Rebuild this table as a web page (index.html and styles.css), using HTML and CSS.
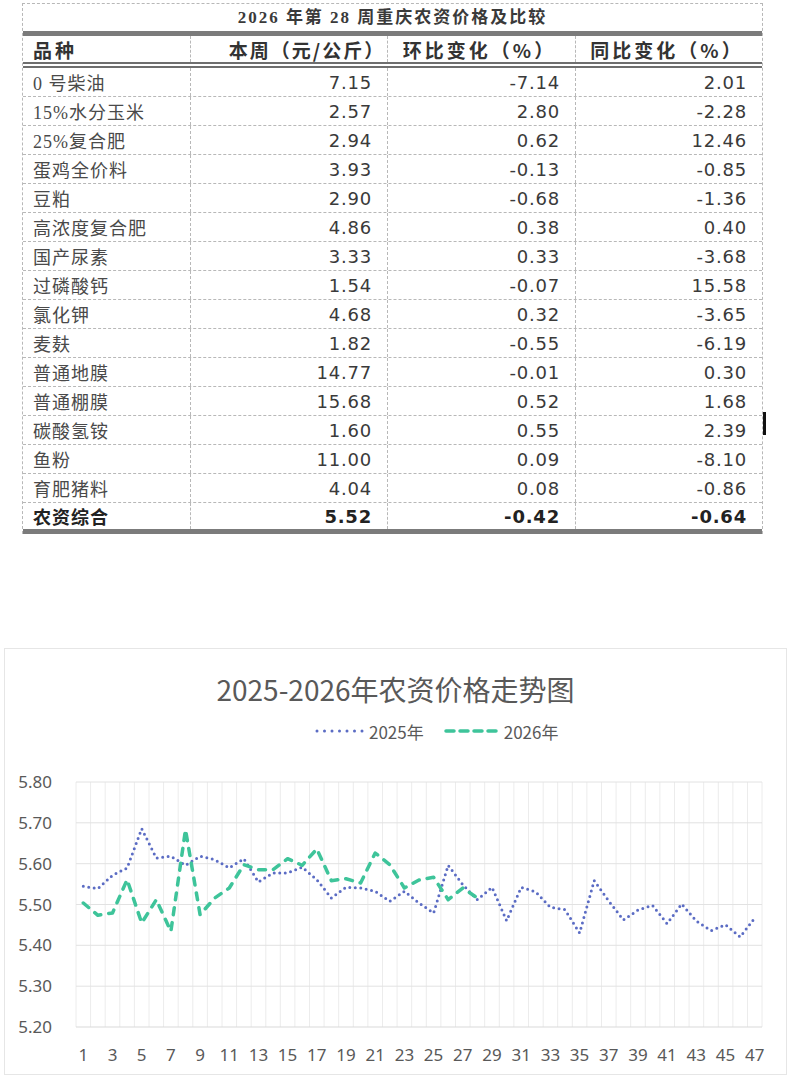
FILE: index.html
```html
<!DOCTYPE html>
<html lang="zh-CN">
<head>
<meta charset="utf-8">
<title>2026年第28周重庆农资价格及比较</title>
<link rel="stylesheet" href="styles.css">
</head>
<body>
<section class="sheet">
  <div class="sheet-title">2026 年第 28 周重庆农资价格及比较</div>
  <div class="row head">
    <div class="cell name">品种</div>
    <div class="cell h2">本周（元/公斤）</div>
    <div class="cell hc">环比变化（%）</div>
    <div class="cell hc">同比变化（%）</div>
  </div>
  <div class="row"><div class="cell name">0 号柴油</div><div class="cell num">7.15</div><div class="cell num">-7.14</div><div class="cell num">2.01</div></div>
  <div class="row"><div class="cell name">15%水分玉米</div><div class="cell num">2.57</div><div class="cell num">2.80</div><div class="cell num">-2.28</div></div>
  <div class="row"><div class="cell name">25%复合肥</div><div class="cell num">2.94</div><div class="cell num">0.62</div><div class="cell num">12.46</div></div>
  <div class="row"><div class="cell name">蛋鸡全价料</div><div class="cell num">3.93</div><div class="cell num">-0.13</div><div class="cell num">-0.85</div></div>
  <div class="row"><div class="cell name">豆粕</div><div class="cell num">2.90</div><div class="cell num">-0.68</div><div class="cell num">-1.36</div></div>
  <div class="row"><div class="cell name">高浓度复合肥</div><div class="cell num">4.86</div><div class="cell num">0.38</div><div class="cell num">0.40</div></div>
  <div class="row"><div class="cell name">国产尿素</div><div class="cell num">3.33</div><div class="cell num">0.33</div><div class="cell num">-3.68</div></div>
  <div class="row"><div class="cell name">过磷酸钙</div><div class="cell num">1.54</div><div class="cell num">-0.07</div><div class="cell num">15.58</div></div>
  <div class="row"><div class="cell name">氯化钾</div><div class="cell num">4.68</div><div class="cell num">0.32</div><div class="cell num">-3.65</div></div>
  <div class="row"><div class="cell name">麦麸</div><div class="cell num">1.82</div><div class="cell num">-0.55</div><div class="cell num">-6.19</div></div>
  <div class="row"><div class="cell name">普通地膜</div><div class="cell num">14.77</div><div class="cell num">-0.01</div><div class="cell num">0.30</div></div>
  <div class="row"><div class="cell name">普通棚膜</div><div class="cell num">15.68</div><div class="cell num">0.52</div><div class="cell num">1.68</div></div>
  <div class="row"><div class="cell name">碳酸氢铵</div><div class="cell num">1.60</div><div class="cell num">0.55</div><div class="cell num">2.39</div></div>
  <div class="row"><div class="cell name">鱼粉</div><div class="cell num">11.00</div><div class="cell num">0.09</div><div class="cell num">-8.10</div></div>
  <div class="row"><div class="cell name">育肥猪料</div><div class="cell num">4.04</div><div class="cell num">0.08</div><div class="cell num">-0.86</div></div>
  <div class="row total"><div class="cell name">农资综合</div><div class="cell num">5.52</div><div class="cell num">-0.42</div><div class="cell num">-0.64</div></div>
  <span class="cursor-bar"></span>
</section>

<section class="chart-card">
  <h2 class="chart-title">2025-2026年农资价格走势图</h2>
  <div class="legend">
    <span class="legend-item">
      <svg class="legend-line" width="52" height="10" viewBox="0 0 52 10"><line x1="2" y1="5" x2="50" y2="5" class="l2025-legend"/></svg>
      <span>2025年</span>
    </span>
    <span class="legend-item">
      <svg class="legend-line" width="58" height="10" viewBox="0 0 58 10"><line x1="2" y1="5" x2="56" y2="5" class="l2026-legend"/></svg>
      <span>2026年</span>
    </span>
  </div>
  <svg class="plot" width="781" height="331" viewBox="0 0 781 331">
    <path class="vgrid" d="M71 39V284M85.6 39V284M100.2 39V284M114.8 39V284M129.4 39V284M144 39V284M158.6 39V284M173.2 39V284M187.8 39V284M202.4 39V284M217 39V284M231.6 39V284M246.2 39V284M260.8 39V284M275.3 39V284M289.9 39V284M304.5 39V284M319.1 39V284M333.7 39V284M348.3 39V284M362.9 39V284M377.5 39V284M392.1 39V284M406.7 39V284M421.3 39V284M435.9 39V284M450.5 39V284M465.1 39V284M479.7 39V284M494.3 39V284M508.9 39V284M523.5 39V284M538.2 39V284M552.7 39V284M567.3 39V284M581.9 39V284M596.5 39V284M611.1 39V284M625.7 39V284M640.3 39V284M654.9 39V284M669.5 39V284M684.1 39V284M698.7 39V284M713.3 39V284M727.9 39V284M742.5 39V284M757 39V284"/>
    <path class="hgrid" d="M71 39H757M71 79.8H757M71 120.7H757M71 161.5H757M71 202.3H757M71 243.2H757"/>
    <path class="axis" d="M71 284H757"/>
    <g class="ylab">
      <text x="47" y="45">5.80</text>
      <text x="47" y="85.8">5.70</text>
      <text x="47" y="126.7">5.60</text>
      <text x="47" y="167.5">5.50</text>
      <text x="47" y="208.3">5.40</text>
      <text x="47" y="249.2">5.30</text>
      <text x="47" y="290">5.20</text>
    </g>
    <g class="xlab">
      <text x="78.3" y="318">1</text>
      <text x="107.5" y="318">3</text>
      <text x="136.7" y="318">5</text>
      <text x="165.9" y="318">7</text>
      <text x="195.1" y="318">9</text>
      <text x="224.3" y="318">11</text>
      <text x="253.4" y="318">13</text>
      <text x="282.6" y="318">15</text>
      <text x="311.8" y="318">17</text>
      <text x="341" y="318">19</text>
      <text x="370.2" y="318">21</text>
      <text x="399.4" y="318">23</text>
      <text x="428.6" y="318">25</text>
      <text x="457.8" y="318">27</text>
      <text x="487" y="318">29</text>
      <text x="516.2" y="318">31</text>
      <text x="545.4" y="318">33</text>
      <text x="574.6" y="318">35</text>
      <text x="603.8" y="318">37</text>
      <text x="633" y="318">39</text>
      <text x="662.1" y="318">41</text>
      <text x="691.3" y="318">43</text>
      <text x="720.5" y="318">45</text>
      <text x="749.7" y="318">47</text>
    </g>
    <polyline class="l2025" points="78.3,143.3 92.9,145.7 107.5,132.3 122.1,125 136.7,85.7 151.3,115 165.9,113.3 180.5,122.3 195.1,113.3 209.7,116.7 224.3,125 238.8,115.7 253.4,139 268,130 282.6,130 297.2,124.3 311.8,136.7 326.4,155 341,144.3 355.6,145 370.2,148.3 384.8,158.3 399.4,148.3 414,160 428.6,170 443.2,122.3 457.8,141.7 472.4,156.7 487,144.3 501.6,177.7 516.2,144.3 530.8,149 545.4,164.3 560,166.7 574.6,190 589.2,137.7 603.8,158 618.4,177 633,167 647.5,162.3 662.1,180.7 676.7,161 691.3,178 705.9,187.7 720.5,181.7 735.1,194 749.7,175"/>
    <polyline class="l2026" points="78.3,160 92.9,172.3 107.5,170 122.1,136.7 136.7,180 151.3,156.7 165.9,188.3 180.5,86.7 195.1,171.7 209.7,155 224.3,145 238.8,121.7 253.4,126.7 268,126.7 282.6,115.7 297.2,122.3 311.8,106 326.4,137.7 341,135.7 355.6,140 370.2,110 384.8,121.7 399.4,145 414,137 428.6,134.3 443.2,156.7 457.8,145 472.4,155"/>
  </svg>
</section>
</body>
</html>
```

FILE: styles.css
```css
html, body {
  margin: 0;
  padding: 0;
  background: #ffffff;
}

body {
  font-family: "Noto Sans CJK SC", "Noto Sans", sans-serif;
  color: #333;
}

/* ---------- table ---------- */
.sheet {
  position: relative;
  width: 739px;
  margin: 3px 0 0 22px;
  border-top: 1px dashed #b8b8b8;
  border-left: 1px dashed #b8b8b8;
  border-right: 1px dashed #b8b8b8;
}

.sheet-title {
  height: 27px;
  line-height: 27px;
  text-align: center;
  font-family: "Liberation Serif", "Noto Sans CJK SC", serif;
  font-size: 17px;
  font-weight: 600;
  letter-spacing: 2px;
  color: #3a3a3a;
  border-bottom: 5px solid #7b7b7b;
}

.row {
  display: grid;
  grid-template-columns: 167px 197px 188px 1fr;
  height: 29px;
  box-sizing: border-box;
  border-bottom: 1px dashed #b8b8b8;
}

.row.head {
  height: 32px;
  border-bottom: 6px double #6e6e6e;
}

.row.total {
  height: 31px;
  border-bottom: 5px solid #7b7b7b;
}

.cell {
  display: flex;
  align-items: center;
  border-left: 1px dashed #b8b8b8;
  padding: 0 15px 0 10px;
  white-space: nowrap;
  overflow: hidden;
}

.cell.name {
  border-left: none;
  font-family: "Liberation Serif", "Noto Sans CJK SC", serif;
  font-size: 18px;
  letter-spacing: 1px;
  color: #4a4a4a;
}

.cell.num {
  justify-content: flex-end;
  font-family: "DejaVu Sans", sans-serif;
  font-size: 18px;
  letter-spacing: 0.8px;
  color: #3a3a3a;
}

.head .cell {
  font-family: "Noto Sans CJK SC", sans-serif;
  font-weight: bold;
  font-size: 19px;
  color: #333;
}

.head .cell.name {
  letter-spacing: 3px;
}

.head .cell.h2 {
  justify-content: center;
  padding-left: 36px;
  padding-right: 0;
  letter-spacing: 2px;
}

.head .cell.hc {
  justify-content: center;
  padding: 0 4px 0 0;
  letter-spacing: 3px;
}

.total .cell {
  font-weight: bold;
  color: #222;
}

.cursor-bar {
  position: absolute;
  right: -4px;
  top: 408px;
  width: 3px;
  height: 23px;
  background: #111;
}

/* ---------- chart ---------- */
.chart-card {
  width: 781px;
  margin: 114px 0 0 4px;
  border: 1px solid #e6e6e6;
  background: #fff;
  display: flex;
  flex-direction: column;
}

.chart-title {
  margin: 22px 0 0 0;
  height: 36px;
  line-height: 36px;
  text-align: center;
  font-family: "Noto Sans CJK SC", "Noto Sans", sans-serif;
  font-weight: normal;
  font-size: 28px;
  color: #595959;
}

.legend {
  margin-top: 12px;
  height: 24px;
  display: flex;
  align-items: center;
  gap: 20px;
  padding-left: 310px;
  font-family: "Noto Sans CJK SC", "Noto Sans", sans-serif;
  font-size: 17px;
  color: #595959;
}

.legend-item {
  display: flex;
  align-items: center;
  gap: 2px;
}

.legend-line {
  display: block;
}

.l2025-legend {
  stroke: #5b6cc4;
  stroke-width: 3;
  stroke-linecap: round;
  stroke-dasharray: 0 7.5;
}

.l2026-legend {
  stroke: #3ec49a;
  stroke-width: 3.5;
  stroke-linecap: round;
  stroke-dasharray: 8 6;
}

.plot {
  display: block;
}

.vgrid {
  stroke: #ececec;
  stroke-width: 1;
  fill: none;
}

.hgrid {
  stroke: #e2e2e2;
  stroke-width: 1;
  fill: none;
}

.axis {
  stroke: #d9d9d9;
  stroke-width: 1.2;
  fill: none;
}

.ylab text {
  font-family: "Noto Sans", "Noto Sans CJK SC", sans-serif;
  font-size: 17px;
  fill: #595959;
  text-anchor: end;
}

.xlab text {
  font-family: "Noto Sans", "Noto Sans CJK SC", sans-serif;
  font-size: 17px;
  fill: #595959;
  text-anchor: middle;
}

.l2025 {
  fill: none;
  stroke: #5b6cc4;
  stroke-width: 3;
  stroke-linecap: round;
  stroke-linejoin: round;
  stroke-dasharray: 0 5.5;
}

.l2026 {
  fill: none;
  stroke: #3ec49a;
  stroke-width: 3.5;
  stroke-linecap: round;
  stroke-linejoin: round;
  stroke-dasharray: 7 8;
}
```
